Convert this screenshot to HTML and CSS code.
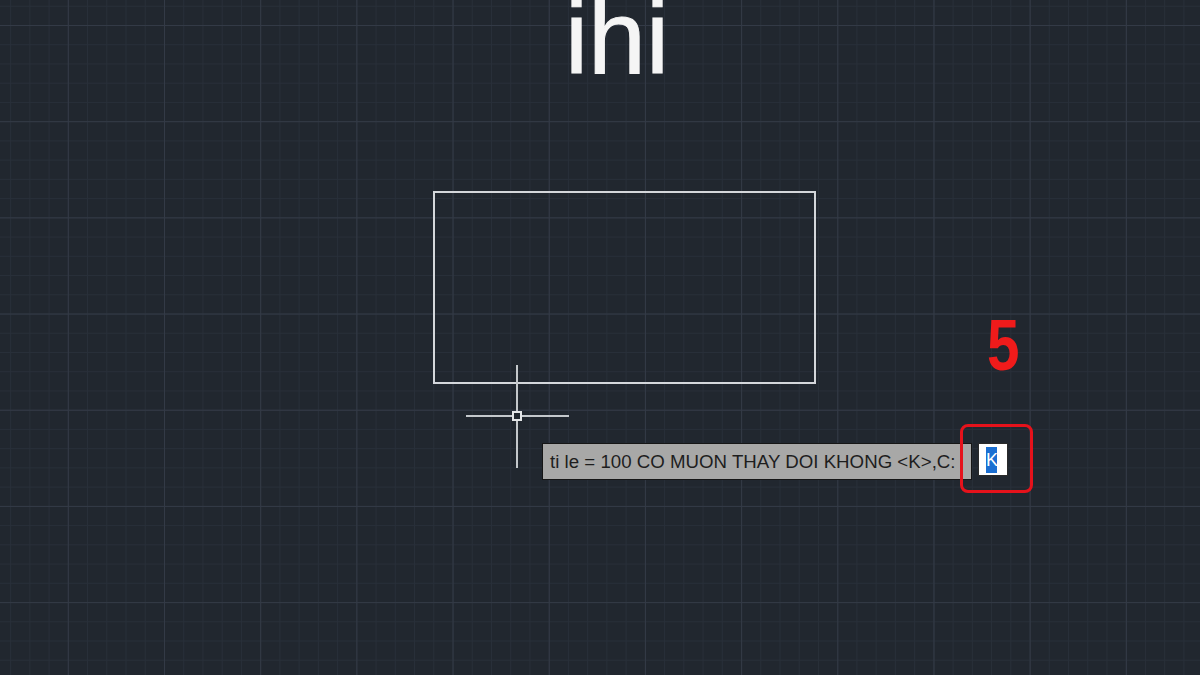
FILE: index.html
```html
<!DOCTYPE html>
<html lang="en">
<head>
    <meta charset="UTF-8"/>
    <title>Drawing</title>
    <link rel="stylesheet" href="styles.css">
</head>
<body>
<div class="canvas">
    <div class="title">ihi</div>

    <div class="rect"></div>

    <div class="cursor">
        <div class="cursor-v"></div>
        <div class="cursor-h"></div>
        <div class="cursor-box"></div>
    </div>

    <div class="prompt">ti le = 100 CO MUON THAY DOI KHONG &lt;K&gt;,C:</div>
    <div class="entry"><span class="selected">K</span></div>

    <div class="step">5</div>
    <div class="highlight"></div>
</div>
</body>
</html>
```

FILE: styles.css
```css
body {
    margin: 0;
    background-color: #21272f;
    font-family: 'Liberation Sans', Arial, sans-serif;
}

.canvas {
    position: relative;
    width: 1200px;
    height: 675px;
    overflow: hidden;
    background-color: #21272f;
    background-image:
        linear-gradient(to right, #333a46 1px, transparent 1px),
        linear-gradient(to bottom, #333a46 1px, transparent 1px),
        linear-gradient(to right, #282f39 1px, transparent 1px),
        linear-gradient(to bottom, #282f39 1px, transparent 1px);
    background-size: 96.2px 96.2px, 96.2px 96.2px, 19.24px 19.24px, 19.24px 19.24px;
    background-position: 164px 25px, 164px 25px, 164px 25px, 164px 25px;
}

.title {
    position: absolute;
    left: 565px;
    top: -15px;
    font-size: 104px;
    line-height: 104px;
    color: #f5f5f5;
    -webkit-text-stroke: 1px #f5f5f5;
}

.rect {
    position: absolute;
    left: 433px;
    top: 191px;
    width: 383px;
    height: 193px;
    box-sizing: border-box;
    border: 2px solid #d4d7db;
}

.cursor {
    position: absolute;
    left: 466px;
    top: 365px;
    width: 103px;
    height: 103px;
}

.cursor-v {
    position: absolute;
    left: 50px;
    top: 0;
    width: 2px;
    height: 103px;
    background-color: #c4c8cc;
}

.cursor-h {
    position: absolute;
    left: 0;
    top: 50px;
    width: 103px;
    height: 2px;
    background-color: #c4c8cc;
}

.cursor-box {
    position: absolute;
    left: 46px;
    top: 46px;
    width: 6px;
    height: 6px;
    border: 2px solid #e4e6e8;
    background-color: #21272f;
}

.prompt {
    position: absolute;
    left: 542px;
    top: 443px;
    width: 430px;
    height: 37px;
    box-sizing: border-box;
    padding-left: 7px;
    border: 1px solid #161616;
    background-color: #a8a8a7;
    color: #1e1e1e;
    font-size: 18.7px;
    line-height: 35px;
    white-space: nowrap;
}

.entry {
    position: absolute;
    left: 978px;
    top: 443px;
    width: 30px;
    height: 33px;
    box-sizing: border-box;
    padding: 3px 0 0 7px;
    border: 1px solid #2a2a2a;
    background-color: #ffffff;
}

.selected {
    display: inline-block;
    width: 11px;
    height: 26px;
    background-color: #1b6fd2;
    color: #ffffff;
    font-size: 18px;
    line-height: 26px;
}

.step {
    position: absolute;
    left: 987px;
    top: 308px;
    font-size: 73px;
    line-height: 73px;
    font-weight: bold;
    color: #f01b1b;
    transform: scaleX(0.8);
    transform-origin: left top;
}

.highlight {
    position: absolute;
    left: 960px;
    top: 424px;
    width: 73px;
    height: 69px;
    box-sizing: border-box;
    border: 3px solid #e5121b;
    border-radius: 8px;
}
```
